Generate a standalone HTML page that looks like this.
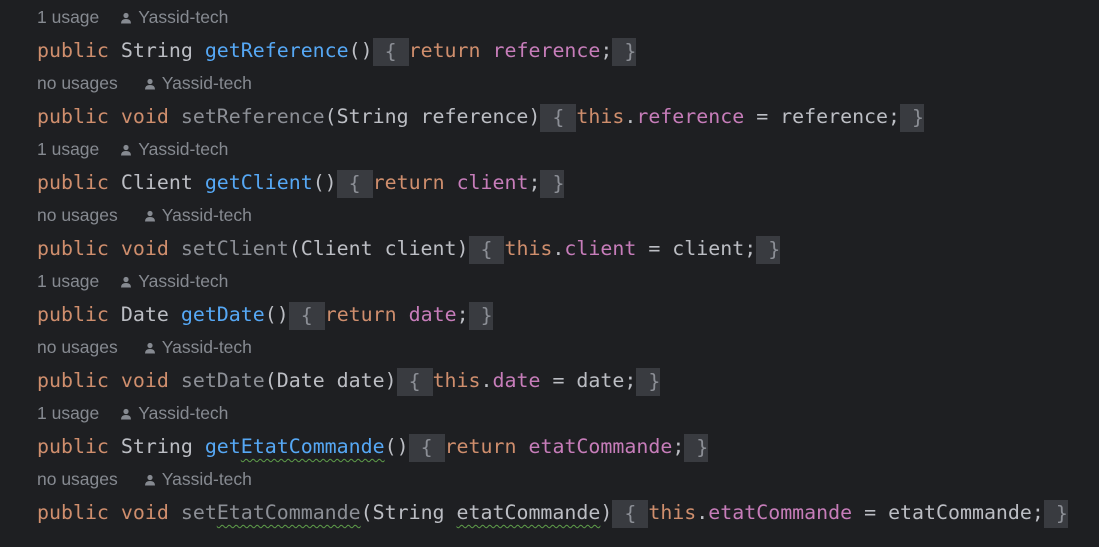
<!DOCTYPE html>
<html><head><meta charset="utf-8"><style>
html,body{margin:0;padding:0;background:#1e1f22;width:1099px;height:547px;overflow:hidden}
.l{position:absolute;left:37px;height:33px;line-height:33px;white-space:pre}
.u{font-family:"Liberation Sans",sans-serif;font-size:17.5px;color:#868a91}
.c{font-family:"DejaVu Sans Mono","Liberation Mono",monospace;font-size:19.92px;color:#bcbec4}
.k{color:#cf8e6d}.m{color:#56a8f5}.g{color:#8c8f96}.f{color:#c77dba}
.b{background:#393b40;display:inline-block;height:28px;line-height:28px;vertical-align:middle;color:#8c8f96}
.w{text-decoration:underline wavy #5f9e4a;text-underline-offset:5px;text-decoration-thickness:1px}
.ic{display:inline-block;width:12px;height:12px;vertical-align:-1px;margin:0 6px 0 21px}
.n .ic{margin-left:26px}
</style></head><body>
<div class="l u" style="top:1px">1 usage<svg class="ic" viewBox="0 0 12 12"><circle cx="6" cy="3.5" r="2.6" fill="#868a91"/><path d="M1 11.5 Q1 7 6 7 Q11 7 11 11.5Z" fill="#868a91"/></svg>Yassid-tech</div>
<div class="l c" style="top:34px"><span class="k">public</span> String <span class="m">getReference</span>()<span class="b"> { </span><span class="k">return</span> <span class="f">reference</span>;<span class="b"> }</span></div>
<div class="l u n" style="top:67px">no usages<svg class="ic" viewBox="0 0 12 12"><circle cx="6" cy="3.5" r="2.6" fill="#868a91"/><path d="M1 11.5 Q1 7 6 7 Q11 7 11 11.5Z" fill="#868a91"/></svg>Yassid-tech</div>
<div class="l c" style="top:100px"><span class="k">public void</span> <span class="g">setReference</span>(String reference)<span class="b"> { </span><span class="k">this</span>.<span class="f">reference</span> = reference;<span class="b"> }</span></div>
<div class="l u" style="top:133px">1 usage<svg class="ic" viewBox="0 0 12 12"><circle cx="6" cy="3.5" r="2.6" fill="#868a91"/><path d="M1 11.5 Q1 7 6 7 Q11 7 11 11.5Z" fill="#868a91"/></svg>Yassid-tech</div>
<div class="l c" style="top:166px"><span class="k">public</span> Client <span class="m">getClient</span>()<span class="b"> { </span><span class="k">return</span> <span class="f">client</span>;<span class="b"> }</span></div>
<div class="l u n" style="top:199px">no usages<svg class="ic" viewBox="0 0 12 12"><circle cx="6" cy="3.5" r="2.6" fill="#868a91"/><path d="M1 11.5 Q1 7 6 7 Q11 7 11 11.5Z" fill="#868a91"/></svg>Yassid-tech</div>
<div class="l c" style="top:232px"><span class="k">public void</span> <span class="g">setClient</span>(Client client)<span class="b"> { </span><span class="k">this</span>.<span class="f">client</span> = client;<span class="b"> }</span></div>
<div class="l u" style="top:265px">1 usage<svg class="ic" viewBox="0 0 12 12"><circle cx="6" cy="3.5" r="2.6" fill="#868a91"/><path d="M1 11.5 Q1 7 6 7 Q11 7 11 11.5Z" fill="#868a91"/></svg>Yassid-tech</div>
<div class="l c" style="top:298px"><span class="k">public</span> Date <span class="m">getDate</span>()<span class="b"> { </span><span class="k">return</span> <span class="f">date</span>;<span class="b"> }</span></div>
<div class="l u n" style="top:331px">no usages<svg class="ic" viewBox="0 0 12 12"><circle cx="6" cy="3.5" r="2.6" fill="#868a91"/><path d="M1 11.5 Q1 7 6 7 Q11 7 11 11.5Z" fill="#868a91"/></svg>Yassid-tech</div>
<div class="l c" style="top:364px"><span class="k">public void</span> <span class="g">setDate</span>(Date date)<span class="b"> { </span><span class="k">this</span>.<span class="f">date</span> = date;<span class="b"> }</span></div>
<div class="l u" style="top:397px">1 usage<svg class="ic" viewBox="0 0 12 12"><circle cx="6" cy="3.5" r="2.6" fill="#868a91"/><path d="M1 11.5 Q1 7 6 7 Q11 7 11 11.5Z" fill="#868a91"/></svg>Yassid-tech</div>
<div class="l c" style="top:430px"><span class="k">public</span> String <span class="m">get<span class="w">EtatCommande</span></span>()<span class="b"> { </span><span class="k">return</span> <span class="f">etatCommande</span>;<span class="b"> }</span></div>
<div class="l u n" style="top:463px">no usages<svg class="ic" viewBox="0 0 12 12"><circle cx="6" cy="3.5" r="2.6" fill="#868a91"/><path d="M1 11.5 Q1 7 6 7 Q11 7 11 11.5Z" fill="#868a91"/></svg>Yassid-tech</div>
<div class="l c" style="top:496px"><span class="k">public void</span> <span class="g">set<span class="w">EtatCommande</span></span>(String <span class="w">etatCommande</span>)<span class="b"> { </span><span class="k">this</span>.<span class="f">etatCommande</span> = etatCommande;<span class="b"> }</span></div>
</body></html>
